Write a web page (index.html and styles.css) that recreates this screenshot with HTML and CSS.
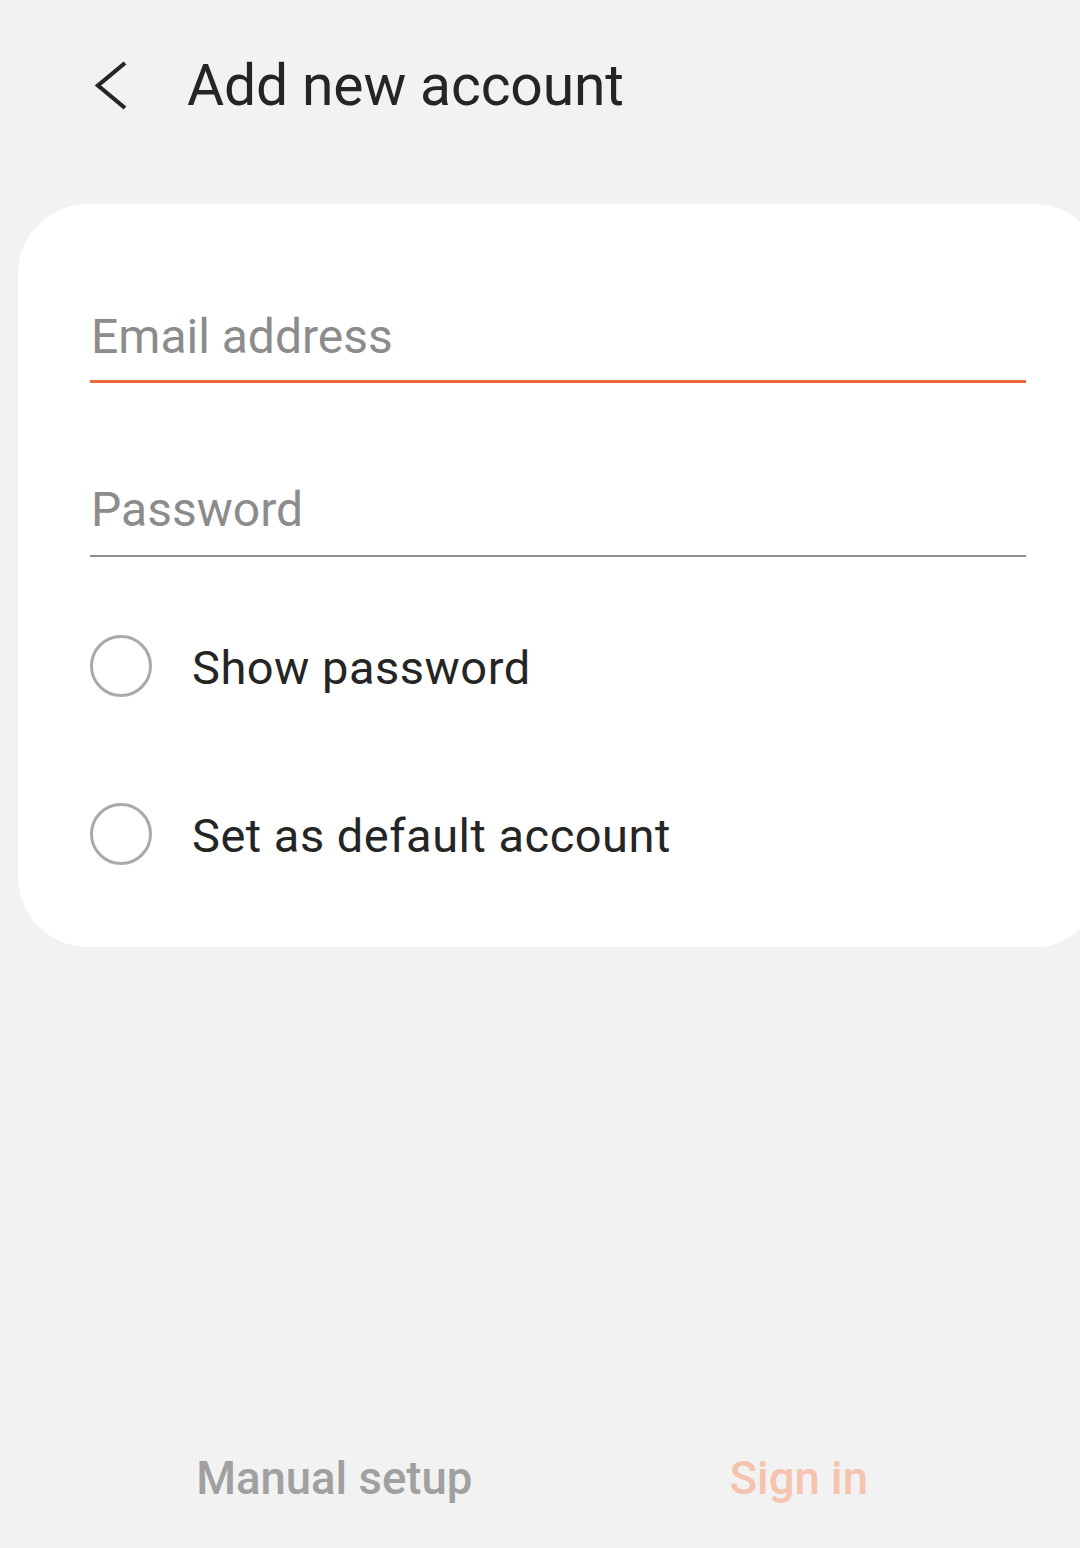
FILE: index.html
```html
<!DOCTYPE html>
<html lang="en">
<head>
<meta charset="utf-8">
<title>Add new account</title>
<link rel="stylesheet" href="styles.css">
</head>
<body>
<div class="page">
  <header class="topbar">
    <svg class="back" viewBox="0 0 48 56" width="48" height="56" aria-hidden="true">
      <path d="M37 5 L10 27.5 L37 50" fill="none" stroke="#252525" stroke-width="4.2" stroke-linecap="butt" stroke-linejoin="miter"/>
    </svg>
    <h1 class="title">Add new account</h1>
  </header>

  <main class="card">
    <div class="field field-active"><span class="placeholder">Email address</span></div>
    <div class="field field-plain"><span class="placeholder">Password</span></div>
    <div class="options">
      <div class="option"><span class="radio"></span><span class="option-label">Show password</span></div>
      <div class="option"><span class="radio"></span><span class="option-label">Set as default account</span></div>
    </div>
  </main>

  <footer class="actions">
    <span class="action action-muted">Manual setup</span>
    <span class="action action-primary">Sign in</span>
  </footer>
</div>
</body>
</html>
```

FILE: styles.css
```css
html, body {
  margin: 0;
  padding: 0;
  background: #f2f2f2;
  overflow: hidden;
}

body {
  font-family: Roboto, "Noto Sans", "Liberation Sans", sans-serif;
  color: #252525;
}

.page {
  display: flex;
  flex-direction: column;
  width: 1080px;
  height: 1548px;
}

.topbar {
  display: flex;
  align-items: center;
  height: 172px;
  padding-left: 88px;
  margin-bottom: 32px;
}

.back {
  display: block;
  flex: none;
}

.title {
  margin: 0 0 0 51px;
  font-size: 57px;
  font-weight: 400;
  line-height: 68px;
  letter-spacing: -0.15px;
  color: #252525;
}

.card {
  box-sizing: border-box;
  width: 1080px;
  margin-left: 18px;
  background: #ffffff;
  border-radius: 70px 62px 62px 70px;
  padding: 103px 72px 82px 72px;
}

.field {
  font-size: 48px;
  line-height: 60px;
}

.placeholder {
  color: #8c8c8c;
  margin-left: 1px;
}

.field-active {
  padding-bottom: 13px;
  border-bottom: 3px solid #e9673a;
}

.field-plain {
  margin-top: 97px;
  padding-bottom: 15px;
  border-bottom: 2px solid #8e8e8e;
}

.options {
  display: flex;
  flex-direction: column;
  gap: 106px;
  margin-top: 78px;
}

.option {
  display: flex;
  align-items: center;
  height: 62px;
}

.radio {
  box-sizing: border-box;
  width: 62px;
  height: 62px;
  border: 3px solid #a9a9a9;
  border-radius: 50%;
  flex: none;
}

.option-label {
  margin-left: 40px;
  font-size: 47px;
  letter-spacing: 0.5px;
  color: #252525;
  position: relative;
  top: 1px;
}

.actions {
  margin-top: auto;
  height: 139px;
  display: grid;
  grid-template-columns: 1fr 1fr;
  align-items: center;
  padding: 0 49px 0 102px;
}

.action {
  text-align: center;
  font-size: 45.5px;
  font-weight: 500;
  line-height: 60px;
}

.action-muted {
  color: #a0a0a0;
}

.action-primary {
  color: #f5c3ae;
}
```
